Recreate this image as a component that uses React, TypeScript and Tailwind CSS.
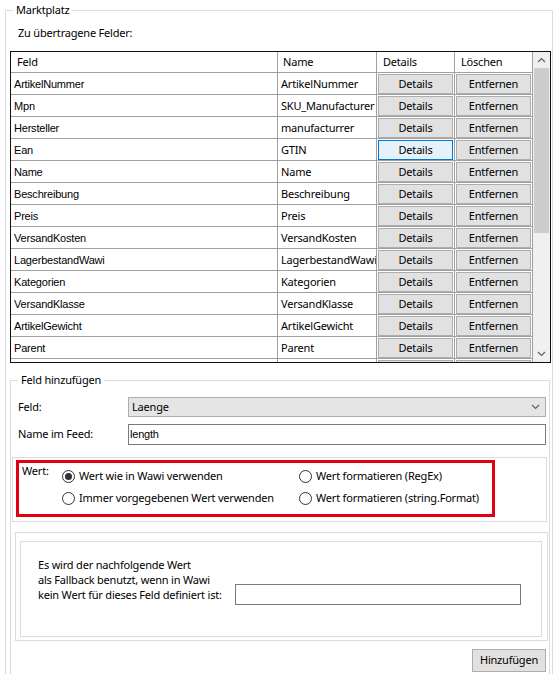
import React from "react";

const rows: [string, string][] = [
  ["ArtikelNummer", "ArtikelNummer"],
  ["Mpn", "SKU_Manufacturer"],
  ["Hersteller", "manufacturrer"],
  ["Ean", "GTIN"],
  ["Name", "Name"],
  ["Beschreibung", "Beschreibung"],
  ["Preis", "Preis"],
  ["VersandKosten", "VersandKosten"],
  ["LagerbestandWawi", "LagerbestandWawi"],
  ["Kategorien", "Kategorien"],
  ["VersandKlasse", "VersandKlasse"],
  ["ArtikelGewicht", "ArtikelGewicht"],
  ["Parent", "Parent"],
  ["", ""],
];

function Chevron({ up = false }: { up?: boolean }) {
  return (
    <svg width="9" height="6" viewBox="0 0 9 6">
      <polyline
        points={up ? "1,5 4.5,1.5 8,5" : "1,1 4.5,4.5 8,1"}
        fill="none"
        stroke="#606060"
        strokeWidth="1.2"
      />
    </svg>
  );
}

function Radio({ label, checked = false }: { label: string; checked?: boolean }) {
  return (
    <div className="flex h-[20px] items-center gap-[4px]">
      <svg width="13" height="13" viewBox="0 0 13 13" className="shrink-0">
        <circle cx="6.5" cy="6.5" r="6" fill="#fff" stroke="#333" strokeWidth="1" />
        {checked && <circle cx="6.5" cy="6.5" r="3.5" fill="#333" />}
      </svg>
      <span>{label}</span>
    </div>
  );
}

function GridButton({ text, focus = false }: { text: string; focus?: boolean }) {
  return (
    <div className="h-full p-[1px]">
      <div
        className={
          "flex h-full items-center justify-center border " +
          (focus ? "border-[#0078d7] bg-[#e5f1fb]" : "border-[#adadad] bg-[#e1e1e1]")
        }
      >
        {text}
      </div>
    </div>
  );
}

function FieldTable() {
  return (
    <div className="ml-[4px] mt-[10px] flex h-[312px] w-[541px] overflow-hidden border border-[#101010]">
      <div className="flex flex-col">
        <div className="grid h-[21px] shrink-0 grid-cols-[267px_99px_78px_78px] border-b border-[#a0a0a0]">
          <div className="border-r border-[#a0a0a0] pl-[6px] leading-[20px]">Feld</div>
          <div className="border-r border-[#a0a0a0] pl-[5px] leading-[20px]">Name</div>
          <div className="border-r border-[#a0a0a0] pl-[6px] leading-[20px]">Details</div>
          <div className="border-r border-[#a0a0a0] pl-[6px] leading-[20px]">Löschen</div>
        </div>
        {rows.map(([feld, name], i) => (
          <div
            key={i}
            className="grid h-[22px] shrink-0 grid-cols-[267px_99px_78px_78px] border-b border-[#a0a0a0]"
          >
            <div className="border-r border-[#a0a0a0] pl-[3px] font-['Liberation_Sans',sans-serif] leading-[22px]">
              {feld}
            </div>
            <div className="overflow-hidden whitespace-nowrap border-r border-[#a0a0a0] pl-[3px] leading-[22px]">
              {name}
            </div>
            <div className="border-r border-[#a0a0a0]">
              <GridButton text={feld ? "Details" : ""} focus={i === 3} />
            </div>
            <div className="border-r border-[#a0a0a0]">
              <GridButton text={feld ? "Entfernen" : ""} />
            </div>
          </div>
        ))}
      </div>
      <div className="flex w-[17px] flex-col bg-[#f0f0f0]">
        <div className="flex h-[16px] items-center justify-center">
          <Chevron up />
        </div>
        <div className="mx-[1px] h-[165px] bg-[#cdcdcd]" />
        <div className="flex-1" />
        <div className="flex h-[16px] items-center justify-center">
          <Chevron />
        </div>
      </div>
    </div>
  );
}

export default function App() {
  return (
    <div className="h-[674px] w-[554px] overflow-hidden bg-white font-['Noto_Sans','Segoe_UI',sans-serif] text-[11px] tracking-[-0.2px] text-black">
      <fieldset className="ml-[5px] mt-[2px] h-[720px] w-[548px] border border-[#dcdcdc]">
        <legend className="ml-[7px] px-[3px] leading-[16px]">Marktplatz</legend>
        <div className="mt-[7px] pl-[12px] leading-[16px]">Zu übertragene Felder:</div>
        <FieldTable />

        <fieldset className="ml-[4px] mt-[9px] h-[400px] w-[540px] border border-[#dcdcdc]">
          <legend className="ml-[7px] px-[3px] leading-[16px]">Feld hinzufügen</legend>

          <div className="mt-[9px] flex h-[20px] items-center">
            <div className="w-[117px] pl-[7px]">Feld:</div>
            <div className="flex h-[20px] w-[418px] items-center justify-between border border-[#adadad] bg-[#e5e5e5] pl-[3px] pr-[5px]">
              <span>Laenge</span>
              <Chevron />
            </div>
          </div>

          <div className="mt-[7px] flex h-[21px] items-center">
            <div className="w-[117px] pl-[7px]">Name im Feed:</div>
            <div className="flex h-[21px] w-[418px] items-center border border-[#7a7a7a] pl-[1px] font-['Liberation_Sans',sans-serif]">
              length
            </div>
          </div>

          <div className="ml-[1px] mt-[12px] h-[65px] w-[535px] border border-[#dcdcdc] pl-[3px] pt-[2px]">
            <div className="flex h-[57px] w-[479px] items-start border-[3px] border-[#e1000f]">
              <div className="w-[43px] pl-[3px] leading-[16px]">Wert:</div>
              <div className="grid grid-cols-[237px_auto] content-start gap-y-[2px] pt-[3px]">
                <Radio label="Wert wie in Wawi verwenden" checked />
                <Radio label="Wert formatieren (RegEx)" />
                <Radio label="Immer vorgegebenen Wert verwenden" />
                <Radio label="Wert formatieren (string.Format)" />
              </div>
            </div>
          </div>

          <div className="ml-[4px] mt-[10px] h-[109px] w-[533px] border border-[#dcdcdc] pl-[4px] pt-[8px]">
            <div className="flex h-[96px] w-[522px] items-start border border-[#dcdcdc] pl-[17px] pt-[15px]">
              <div className="w-[197px] leading-[15px]">
                Es wird der nachfolgende Wert
                <br />
                als Fallback benutzt, wenn in Wawi
                <br />
                kein Wert für dieses Feld definiert ist:
              </div>
              <div className="mt-[27px] h-[21px] w-[286px] border border-[#7a7a7a]" />
            </div>
          </div>

          <div className="mt-[8px] flex justify-end pr-[3px]">
            <div className="flex h-[23px] w-[74px] items-center justify-center border border-[#adadad] bg-[#e1e1e1]">
              Hinzufügen
            </div>
          </div>
        </fieldset>
      </fieldset>
    </div>
  );
}
